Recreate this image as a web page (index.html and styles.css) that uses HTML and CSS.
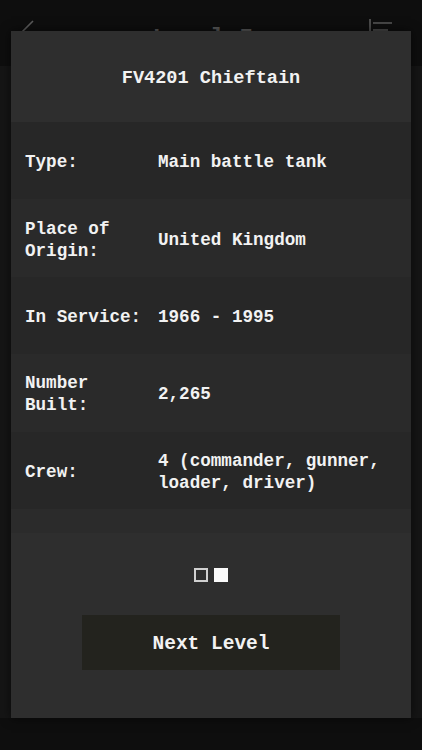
FILE: index.html
```html
<!DOCTYPE html>
<html>
<head>
<meta charset="utf-8">
<link rel="stylesheet" href="styles.css">
</head>
<body>
<div class="page">
  <header class="topbar">
    <svg class="back" width="20" height="24" viewBox="0 0 20 24"><path d="M15 2 L5 12 L15 22" fill="none" stroke="#5a5a5a" stroke-width="1.6"/></svg>
    <div class="topTitle">Level 5</div>
    <svg class="menu" width="26" height="24" viewBox="0 0 26 24"><path d="M2 0 V24 M5 4 H24 M5 11 H20 M5 18 H16" fill="none" stroke="#5a5a5a" stroke-width="1.6"/></svg>
  </header>
  <main class="content"></main>

  <div class="modal">
    <div class="modalTitle">FV4201 Chieftain</div>
    <div class="rows">
      <div class="row dark"><div class="label">Type:</div><div class="value">Main battle tank</div></div>
      <div class="row light"><div class="label">Place of Origin:</div><div class="value">United Kingdom</div></div>
      <div class="row dark"><div class="label">In Service:</div><div class="value">1966 - 1995</div></div>
      <div class="row light"><div class="label">Number Built:</div><div class="value">2,265</div></div>
      <div class="row dark"><div class="label">Crew:</div><div class="value">4 (commander, gunner, loader, driver)</div></div>
      <div class="row band"></div>
    </div>
    <div class="dots"><span class="dot"></span><span class="dot on"></span></div>
    <div class="btnWrap"><div class="btn">Next Level</div></div>
  </div>
</div>
</body>
</html>
```
FILE: styles.css
```css
* { box-sizing: border-box; }
html, body { margin: 0; padding: 0; }
body {
  background: #0e0e0e;
  font-family: "Liberation Mono", "Courier New", monospace;
  color: #f2f2f2;
}
.page {
  position: relative;
  width: 422px;
  height: 750px;
  overflow: hidden;
  display: flex;
  flex-direction: column;
}
.topbar {
  height: 66px;
  flex: none;
  display: flex;
  align-items: center;
  justify-content: space-between;
  padding: 0 28px 0 18px;
  background: #0e0e0e;
}
.topTitle {
  font-size: 24px;
  font-weight: bold;
  color: #555;
  padding-top: 10px;
}
.back { margin-top: -4px; }
.menu { margin-top: -4px; }
.content {
  flex: 1;
  background: #151515;
  margin-bottom: 32px;
}
.modal {
  position: absolute;
  left: 11px;
  top: 31px;
  width: 400px;
  height: 687px;
  background: #2e2e2e;
  box-shadow: 0 0 10px rgba(0,0,0,0.6);
  display: flex;
  flex-direction: column;
}
.modalTitle {
  height: 91px;
  display: flex;
  align-items: center;
  justify-content: center;
  font-size: 18.6px;
  font-weight: bold;
  padding-top: 4px;
}
.rows { display: flex; flex-direction: column; }
.row {
  height: 77.4px;
  display: flex;
  align-items: center;
  font-size: 17.6px;
  font-weight: bold;
  line-height: 22px;
  padding-top: 3px;
}
.row.dark { background: #272727; }
.row.light { background: #2a2a2a; }
.row.band { height: 24px; background: #2b2b2b; }
.label {
  width: 147px;
  padding-left: 14px;
  padding-right: 10px;
  flex: none;
}
.value { flex: 1; padding-right: 20px; }
.dots {
  display: flex;
  justify-content: center;
  gap: 6px;
  margin-top: 35px;
}
.dot {
  width: 14px;
  height: 14px;
  border: 2px solid #d0d0d0;
}
.dot.on { background: #fafafa; border-color: #fafafa; }
.btnWrap {
  display: flex;
  justify-content: center;
  margin-top: 33px;
}
.btn {
  width: 258px;
  height: 55px;
  background: #23231e;
  display: flex;
  align-items: center;
  justify-content: center;
  font-size: 19.5px;
  font-weight: bold;
  padding-top: 4px;
}
```
